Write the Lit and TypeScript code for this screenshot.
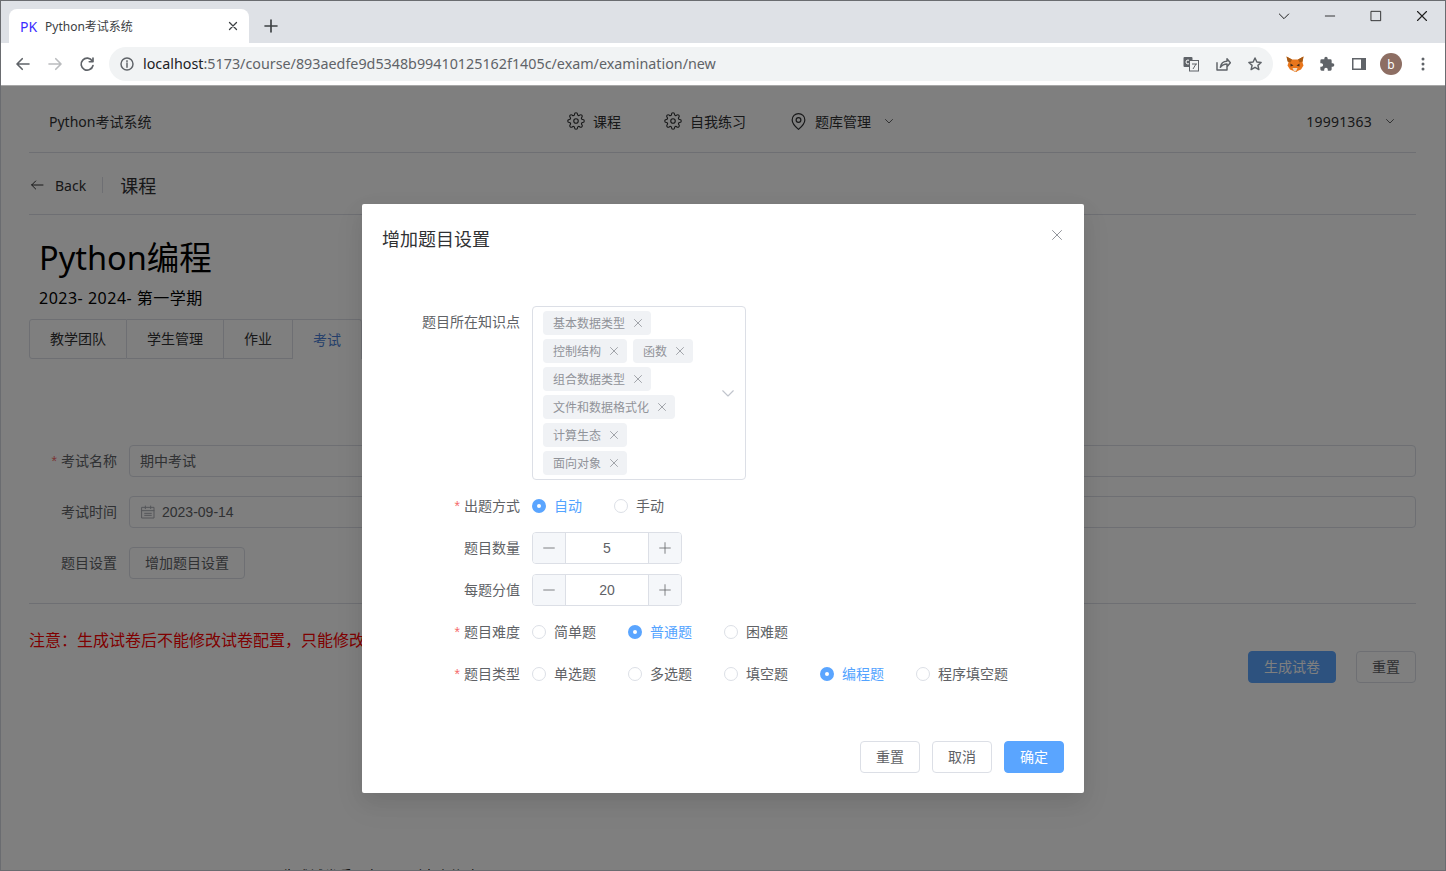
import { LitElement, css, html, svg } from "lit";
import { customElement } from "lit/decorators.js";

const gear = svg`<circle cx="12" cy="12" r="3"/><path d="M19.4 15a1.65 1.65 0 0 0 .33 1.82l.06.06a2 2 0 0 1 0 2.83 2 2 0 0 1-2.83 0l-.06-.06a1.65 1.65 0 0 0-1.82-.33 1.65 1.65 0 0 0-1 1.51V21a2 2 0 0 1-2 2 2 2 0 0 1-2-2v-.09A1.65 1.65 0 0 0 9 19.4a1.65 1.65 0 0 0-1.82.33l-.06.06a2 2 0 0 1-2.83 0 2 2 0 0 1 0-2.83l.06-.06a1.65 1.65 0 0 0 .33-1.82 1.65 1.65 0 0 0-1.51-1H3a2 2 0 0 1-2-2 2 2 0 0 1 2-2h.09A1.65 1.65 0 0 0 4.6 9a1.65 1.65 0 0 0-.33-1.82l-.06-.06a2 2 0 0 1 0-2.83 2 2 0 0 1 2.83 0l.06.06a1.65 1.65 0 0 0 1.82.33H9a1.65 1.65 0 0 0 1-1.51V3a2 2 0 0 1 2-2 2 2 0 0 1 2 2v.09a1.65 1.65 0 0 0 1 1.51 1.65 1.65 0 0 0 1.82-.33l.06-.06a2 2 0 0 1 2.83 0 2 2 0 0 1 0 2.83l-.06.06a1.65 1.65 0 0 0-.33 1.82V9a1.65 1.65 0 0 0 1.51 1H21a2 2 0 0 1 2 2 2 2 0 0 1-2 2h-.09a1.65 1.65 0 0 0-1.51 1z"/>`;
const chevron = svg`<path d="M5 9l7 7 7-7"/>`;
const cross = svg`<path d="M6 6l12 12M18 6L6 18"/>`;

const icon = (body: unknown, size: number, cls = "") =>
  html`<svg class="icon ${cls}" width=${size} height=${size} viewBox="0 0 24 24">${body}</svg>`;

const tags = [["基本数据类型"], ["控制结构", "函数"], ["组合数据类型"], ["文件和数据格式化"], ["计算生态"], ["面向对象"]];

@customElement("app-root")
export class AppRoot extends LitElement {
  static styles = css`
    :host {
      display: block;
      height: 871px;
      overflow: hidden;
      font-family: "Noto Sans", "Noto Sans CJK SC", sans-serif;
      font-size: 14px;
      color: #303133;
      background: #fff;
    }
    * { box-sizing: border-box; }
    .window { height: 871px; display: flex; flex-direction: column; border: 1px solid #6a6c70; position: relative; overflow: hidden; }
    .icon { fill: none; stroke: currentColor; stroke-width: 1.5; stroke-linecap: round; stroke-linejoin: round; flex: none; display: block; }

    /* browser chrome */
    .strip { height: 42px; background: #dee1e6; display: flex; padding: 8px 0 0 8px; flex: none; color: #3c4043; }
    .tab { width: 240px; height: 34px; background: #fff; border-radius: 8px 8px 0 0; display: flex; align-items: center; padding: 0 9px 0 11px; font-size: 12px; }
    .tab .icon { stroke-width: 2.2; }
    .fav { color: #3a2cff; font-size: 14px; width: 25px; font-family: "Noto Sans", sans-serif; }
    .tab-title { flex: 1; }
    .plus { margin-left: 13px; margin-top: 8px; color: #3c4043; }
    .plus .icon { stroke-width: 2.2; }
    .caption { margin-left: auto; display: flex; margin-top: -1px; height: 16px; align-items: flex-start; color: #1f1f1f; }
    .cap { width: 46px; height: 16px; display: flex; justify-content: center; align-items: center; }
    .toolbar { height: 43px; background: #fff; flex: none; display: flex; align-items: center; padding: 0 12px; color: #5f6368; border-bottom: 1px solid #a7a7a7; }
    .toolbar .icon { stroke-width: 2.2; }
    .nav-btn { width: 20px; margin-right: 12px; display: flex; justify-content: center; }
    .nav-btn.off { color: #babcbe; }
    .omni { width: 1164px; height: 34px; background: #f1f3f4; border-radius: 17px; display: flex; align-items: center; padding: 0 10px; font-size: 14.32px; color: #5f6368; }
    .omni b { font-weight: 400; color: #202124; }
    .omni-url { margin-left: 8px; flex: 1; padding-bottom: 2px; }
    .omni-tools { display: flex; gap: 16px; align-items: center; }
    .ext { display: flex; align-items: center; }
    .fox { margin-left: 13px; }
    .puzzle { margin-left: 15px; }
    .side { margin-left: 16px; }
    .avatar { width: 22px; height: 22px; border-radius: 50%; background: #8d6e63; color: #fff; font-size: 12px; display: flex; align-items: center; justify-content: center; margin-left: 13px; }
    .kebab { margin-left: 19px; }

    /* page behind the mask */
    .page { flex: 1; padding: 0 29px 0 28px; min-height: 0; }
    .head { height: 67px; padding-top: 4px; border-bottom: 1px solid #dcdfe6; display: flex; align-items: center; }
    .brand { width: 539px; padding-left: 20px; }
    .menu-item { display: flex; align-items: center; gap: 9px; margin-right: 44px; }
    .menu-item.last { margin-right: 0; }
    .menu-item .caret { margin-left: 3px; }
    .cog { margin: 0 -1px; }
    .pin { margin: 0 -1.5px; }
    .user { margin-left: auto; display: flex; align-items: center; gap: 12px; padding-right: 20px; letter-spacing: 0.2px; }
    .crumb { height: 62px; padding-top: 3px; border-bottom: 1px solid #dcdfe6; display: flex; align-items: center; }
    .back-label { margin-left: 10px; }
    .crumb-divider { width: 1px; height: 16px; background: #dcdfe6; margin: 0 17px 0 16px; }
    .crumb-title { font-size: 18px; }
    .course-name { font-size: 32.5px; line-height: 44px; margin: 21px 0 0 10px; color: #000; }
    .term { font-size: 16px; line-height: 22px; margin: 7px 0 0 10px; color: #000; letter-spacing: 0.5px; }
    .tabs { display: flex; margin-top: 10px; height: 40px; }
    .page-tab { border: 1px solid #dcdfe6; border-left: 0; padding: 0 20px 2px; display: flex; align-items: center; justify-content: center; white-space: nowrap; }
    .page-tab:first-child { border-left: 1px solid #dcdfe6; border-radius: 3px 0 0 3px; }
    .page-tab.on { color: #4a7fd6; border-bottom: 0; border-radius: 0 3px 0 0; }
    .main-form { margin-top: 86px; display: flex; flex-direction: column; gap: 19px; }
    .main-row { display: flex; align-items: center; height: 32px; }
    .main-label { width: 88px; text-align: right; margin-right: 12px; color: #606266; padding-bottom: 2px; }
    .star { color: #f56c6c; margin-right: 4px; font-family: "Liberation Sans", sans-serif; }
    .box { flex: 1; height: 32px; border: 1px solid #dcdfe6; border-radius: 4px; padding: 0 10px 2px; display: flex; align-items: center; color: #606266; }
    .date { font-family: "Liberation Sans", sans-serif; gap: 6px; padding-bottom: 0; }
    .date svg { color: #a8abb2; }
    .plain { height: 32px; padding: 0 15px 2px; border: 1px solid #dcdfe6; border-radius: 4px; display: flex; align-items: center; justify-content: center; color: #606266; background: #fff; }
    .rule { height: 1px; background: #dcdfe6; margin-top: 24px; }
    .notice { display: flex; align-items: flex-start; margin-top: 25px; }
    .warn { color: #f00; font-size: 16px; line-height: 22px; }
    .gen-actions { margin-left: auto; margin-top: 22px; display: flex; gap: 20px; }
    .gen { background: #5aa5ff; border-color: #5aa5ff; color: #fff; width: 88px; }
    .gen-reset { width: 60px; background: transparent; }
    .cut { margin: 183px 0 0 253px; color: #000; font-size: 14px; line-height: 20px; }

    /* mask + dialog */
    .mask { position: absolute; left: 0; right: 0; top: 85px; bottom: 0; background: rgba(0, 0, 0, 0.5); }
    .dialog { position: absolute; left: 361px; top: 118px; width: 722px; height: 589px; background: #fff; border-radius: 2px; box-shadow: 0 12px 32px 4px rgba(0,0,0,.04), 0 8px 20px rgba(0,0,0,.08); padding: 20px; color: #606266; display: flex; flex-direction: column; }
    .dlg-title { font-size: 18px; line-height: 30px; color: #303133; }
    .dlg-close { position: absolute; right: 18px; top: 22px; color: #909399; }
    .dlg-close .icon { stroke-width: 1.3; }
    .dlg-body { margin-top: 52px; display: flex; flex-direction: column; gap: 10px; }
    .row { display: flex; align-items: flex-start; min-height: 32px; }
    .label { width: 138px; text-align: right; margin-right: 12px; line-height: 32px; flex: none; }
    .select { width: 214px; border: 1px solid #dcdfe6; border-radius: 4px; padding: 4px 10px; display: flex; flex-direction: column; gap: 4px; position: relative; }
    .tag-line { display: flex; gap: 6px; }
    .tag { height: 24px; background: #f0f2f5; color: #909399; font-size: 12px; border-radius: 4px; display: flex; align-items: center; padding: 0 6px 1px 10px; gap: 6px; }
    .tag .icon { stroke-width: 1.4; }
    .sel-caret { position: absolute; right: 8px; top: 77px; color: #c0c4cc; }
    .radios { display: flex; align-items: center; height: 32px; }
    .radio { display: flex; align-items: center; gap: 8px; margin-right: 32px; }
    .radio-text { padding-bottom: 2px; }
    .dot { width: 14px; height: 14px; border-radius: 50%; border: 1px solid #dcdfe6; background: #fff; }
    .radio.on { color: #53a3ff; }
    .radio.on .dot { border: 5px solid #5aa5ff; background: #fff; }
    .stepper { width: 150px; height: 32px; border: 1px solid #dcdfe6; border-radius: 4px; display: flex; font-family: "Liberation Sans", sans-serif; }
    .step { width: 33px; background: #f5f7fa; display: flex; align-items: center; justify-content: center; color: #606266; flex: none; border-radius: 3px 0 0 3px; }
    .step:first-child { border-right: 1px solid #dcdfe6; }
    .step:last-child { border-left: 1px solid #dcdfe6; border-radius: 0 3px 3px 0; }
    .step .icon { stroke-width: 1.2; }
    .value { flex: 1; display: flex; align-items: center; justify-content: center; }
    .dlg-foot { margin-top: auto; display: flex; justify-content: flex-end; gap: 12px; }
    .foot-btn { width: 60px; }
    .primary { background: #5aa5ff; border-color: #5aa5ff; color: #fff; }
  `;

  private radios(items: string[], on: number) {
    return html`<div class="radios">
      ${items.map((t, i) => html`<div class="radio ${i === on ? "on" : ""}"><span class="dot"></span><span class="radio-text">${t}</span></div>`)}
    </div>`;
  }

  private stepper(value: string) {
    return html`<div class="stepper">
      <div class="step">${icon(svg`<path d="M4 12h16"/>`, 16)}</div>
      <div class="value">${value}</div>
      <div class="step">${icon(svg`<path d="M4 12h16M12 4v16"/>`, 16)}</div>
    </div>`;
  }

  render() {
    return html`<div class="window">
      <div class="strip">
        <div class="tab">
          <span class="fav">PK</span><span class="tab-title">Python考试系统</span>
          ${icon(cross, 14)}
        </div>
        <div class="plus">${icon(svg`<path d="M4 12h16M12 4v16"/>`, 18)}</div>
        <div class="caption">
          <div class="cap">${icon(svg`<path d="M5 9l7 7 7-7"/>`, 16)}</div>
          <div class="cap">${icon(svg`<path d="M4 12h16"/>`, 14)}</div>
          <div class="cap">${icon(svg`<rect x="4" y="4" width="16" height="16"/>`, 14)}</div>
          <div class="cap">${icon(cross, 18)}</div>
        </div>
      </div>
      <div class="toolbar">
        <div class="nav-btn">${icon(svg`<path d="M20 12H5M11 5l-7 7 7 7"/>`, 18)}</div>
        <div class="nav-btn off">${icon(svg`<path d="M4 12h15M13 5l7 7-7 7"/>`, 18)}</div>
        <div class="nav-btn">${icon(svg`<path d="M19 8a8 8 0 1 0 1 6M20 4v5h-5"/>`, 18)}</div>
        <div class="omni">
          ${icon(svg`<circle cx="12" cy="12" r="9"/><path d="M12 11v6M12 7v1.5"/>`, 16)}
          <span class="omni-url"><b>localhost</b>:5173/course/893aedfe9d5348b99410125162f1405c/exam/examination/new</span>
          <div class="omni-tools">
            <svg width="16" height="16" viewBox="0 0 16 16"><rect x="0.500" y="1" width="9" height="10" rx="1" fill="#5f6368"/><circle cx="5" cy="6" r="2" fill="none" stroke="#fff"/><rect x="6.500" y="4.500" width="9" height="10.500" fill="#f1f3f4" stroke="#5f6368"/><path d="M9 8h5M10 13l3-5" fill="none" stroke="#5f6368"/></svg>
            <svg class="icon share" width="16" height="16" viewBox="0 0 24 24"><path d="M3 10v11h15v-5M8 17c1-6 5-9 10-9V4l5 6-5 6v-4c-4 0-7 1-10 5z"/></svg>
            ${icon(svg`<path d="M12 3l2.800 6 6.400.7-4.800 4.300 1.400 6.400L12 17l-5.800 3.400 1.400-6.400-4.800-4.300 6.400-.7z"/>`, 16)}
          </div>
        </div>
        <div class="ext">
          <svg class="fox" width="18" height="18" viewBox="0 0 18 18">
            <path d="M0.500 1.500l5.500 3h6l5.500-3-1 6 1 3-2.500 4-3.500 1.500-1 1h-2l-1-1-3.500-1.500-2.500-4 1-3z" fill="#e8761c"/>
            <path d="M0.500 1.500l5.500 3-1.500 3-3-1zM17.500 1.500l-5.500 3 1.500 3 3-1z" fill="#a65a14"/>
            <path d="M4.500 8.500l3 2-3 1zM13.500 8.500l-3 2 3 1z" fill="#3f2a1d"/>
            <path d="M6.500 13h5l-1.500 3.500h-2z" fill="#f0dcc6"/>
          </svg>
          <svg class="puzzle" width="16" height="16" viewBox="0 0 24 24" fill="#5f6368"><path d="M20.500 11H19V7a2 2 0 0 0-2-2h-4V3.500a2.500 2.500 0 0 0-5 0V5H4a2 2 0 0 0-2 2v3.800h1.500a2.700 2.700 0 0 1 0 5.400H2V20a2 2 0 0 0 2 2h3.800v-1.500a2.700 2.700 0 0 1 5.400 0V22H17a2 2 0 0 0 2-2v-4h1.500a2.500 2.500 0 0 0 0-5z"/></svg>
          <svg class="side" width="16" height="16" viewBox="0 0 16 16"><rect x="1" y="2" width="14" height="12" fill="#5f6368"/><rect x="2.500" y="3.500" width="7.500" height="9" fill="#fff"/></svg>
          <span class="avatar">b</span>
          <svg class="kebab" width="4" height="14" viewBox="0 0 4 14" fill="#5f6368"><circle cx="2" cy="2" r="1.500"/><circle cx="2" cy="7" r="1.500"/><circle cx="2" cy="12" r="1.500"/></svg>
        </div>
      </div>

      <div class="page">
        <div class="head">
          <div class="brand">Python考试系统</div>
          <div class="menu-item">${icon(gear, 18, "cog")}课程</div>
          <div class="menu-item">${icon(gear, 18, "cog")}自我练习</div>
          <div class="menu-item last">${icon(svg`<path d="M20 10c0 5-8 12-8 12s-8-7-8-12a8 8 0 0 1 16 0z"/><circle cx="12" cy="10" r="3"/>`, 19, "pin")}题库管理<span class="caret">${icon(chevron, 12)}</span></div>
          <div class="user">19991363 ${icon(chevron, 12)}</div>
        </div>
        <div class="crumb">
          ${icon(svg`<path d="M21 12H4M10 6l-6 6 6 6"/>`, 16)}
          <span class="back-label">Back</span>
          <div class="crumb-divider"></div>
          <div class="crumb-title">课程</div>
        </div>
        <div class="course-name">Python编程</div>
        <div class="term">2023- 2024- 第一学期</div>
        <div class="tabs">
          <div class="page-tab">教学团队</div>
          <div class="page-tab">学生管理</div>
          <div class="page-tab">作业</div>
          <div class="page-tab on">考试</div>
        </div>
        <div class="main-form">
          <div class="main-row"><div class="main-label"><span class="star">*</span>考试名称</div><div class="box">期中考试</div></div>
          <div class="main-row"><div class="main-label">考试时间</div><div class="box date">${icon(svg`<rect x="3" y="5" width="18" height="16"/><path d="M3 10h18M8 3v4M16 3v4M7 14h10M7 17h10"/>`, 16)}2023-09-14</div></div>
          <div class="main-row"><div class="main-label">题目设置</div><div class="plain">增加题目设置</div></div>
        </div>
        <div class="rule"></div>
        <div class="notice">
          <div class="warn">注意：生成试卷后不能修改试卷配置，只能修改试卷题目</div>
          <div class="gen-actions"><div class="plain gen">生成试卷</div><div class="plain gen-reset">重置</div></div>
        </div>
        <div class="cut">生成试卷后可在题目列表中修改题目</div>
      </div>

      <div class="mask">
        <div class="dialog">
          <div class="dlg-title">增加题目设置</div>
          <div class="dlg-close">${icon(cross, 18)}</div>
          <div class="dlg-body">
            <div class="row">
              <div class="label">题目所在知识点</div>
              <div class="select">
                ${tags.map((line) => html`<div class="tag-line">
                  ${line.map((t) => html`<span class="tag">${t}${icon(cross, 14)}</span>`)}
                </div>`)}
                <span class="sel-caret">${icon(chevron, 18)}</span>
              </div>
            </div>
            <div class="row"><div class="label"><span class="star">*</span>出题方式</div>${this.radios(["自动", "手动"], 0)}</div>
            <div class="row"><div class="label">题目数量</div>${this.stepper("5")}</div>
            <div class="row"><div class="label">每题分值</div>${this.stepper("20")}</div>
            <div class="row"><div class="label"><span class="star">*</span>题目难度</div>${this.radios(["简单题", "普通题", "困难题"], 1)}</div>
            <div class="row"><div class="label"><span class="star">*</span>题目类型</div>${this.radios(["单选题", "多选题", "填空题", "编程题", "程序填空题"], 3)}</div>
          </div>
          <div class="dlg-foot">
            <div class="plain foot-btn">重置</div>
            <div class="plain foot-btn">取消</div>
            <div class="plain foot-btn primary">确定</div>
          </div>
        </div>
      </div>
    </div>`;
  }
}
